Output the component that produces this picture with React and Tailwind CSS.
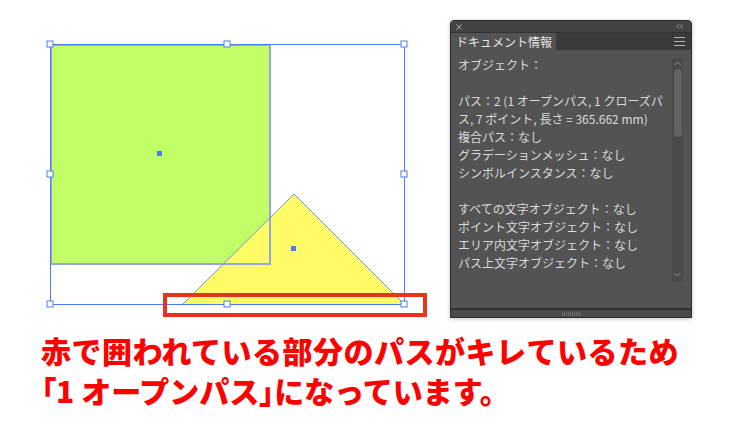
import React from "react";

const BLUE = "#4a7df0";

const handles = [
  [50, 44], [227, 44], [404, 44],
  [50, 174], [404, 174],
  [50, 304], [227, 304], [404, 304],
];

const Artboard = () => (
  <svg width="440" height="320" viewBox="0 0 440 320" className="shrink-0 block">
    {/* fills */}
    <rect x="50" y="44" width="220" height="220" fill="#c2ff66" />
    <polygon points="183,304 294,194 404,304" fill="#fffb66" />

    {/* selection outlines */}
    <rect x="51" y="45" width="219" height="219" fill="none" stroke="#93a7dc" strokeWidth="2" />
    <polyline points="183,304 294,194 404,304" fill="none" stroke="#6a95f2" strokeWidth="1" />
    <rect x="50.5" y="44.5" width="354" height="260" fill="none" stroke={BLUE} strokeWidth="1" />

    {handles.map(([x, y]) => (
      <rect key={`${x}-${y}`} x={x - 3} y={y - 3} width="6" height="6" fill="#fff" stroke={BLUE} strokeWidth="1" />
    ))}

    <rect x="157" y="151" width="5" height="5" fill={BLUE} />
    <rect x="291" y="246" width="5" height="5" fill={BLUE} />

    {/* callout */}
    <rect x="165" y="295" width="260" height="20" fill="none" stroke="#e8341c" strokeWidth="4" />
  </svg>
);

const infoLines = [
  "オブジェクト：",
  "",
  "パス：2 (1 オープンパス, 1 クローズパ",
  "ス, 7 ポイント, 長さ = 365.662 mm)",
  "複合パス：なし",
  "グラデーションメッシュ：なし",
  "シンボルインスタンス：なし",
  "",
  "すべての文字オブジェクト：なし",
  "ポイント文字オブジェクト：なし",
  "エリア内文字オブジェクト：なし",
  "パス上文字オブジェクト：なし",
];

const DocInfoPanel = () => (
  <div className="w-[242px] h-[298px] flex flex-col bg-[#535353] border border-[#2c2c2c] rounded-t-[4px] shadow-[0_1px_4px_rgba(0,0,0,0.25)] overflow-hidden font-['Noto_Sans_CJK_JP',sans-serif]">
    {/* title bar */}
    <div className="h-[12px] flex items-center justify-between px-[5px] bg-[#434343] border-b border-[#333333]">
      <svg width="6" height="6" viewBox="0 0 6 6">
        <path d="M0.5 0.5 L5.5 5.5 M5.5 0.5 L0.5 5.5" stroke="#a8a8a8" strokeWidth="1" />
      </svg>
      <svg width="7" height="5" viewBox="0 0 7 5" className="mr-[3px]">
        <path d="M3 0.5 L1 2.5 L3 4.5 M6.5 0.5 L4.5 2.5 L6.5 4.5" stroke="#9a9a9a" strokeWidth="1" fill="none" />
      </svg>
    </div>

    {/* tab row */}
    <div className="h-[17px] flex items-stretch bg-[#3a3a3a]">
      <div className="w-[105px] bg-[#535353] flex items-center pl-[5px] text-[12px] leading-none text-[#e4e4e4]">
        ドキュメント情報
      </div>
      <div className="flex-1 flex items-center justify-end pr-[6px]">
        <svg width="11" height="9" viewBox="0 0 11 9">
          <path d="M0 0.5 H11 M0 4.5 H11 M0 8.5 H11" stroke="#b4b4b4" strokeWidth="1" />
        </svg>
      </div>
    </div>

    {/* content */}
    <div className="flex-1 flex">
      <div className="flex-1 pl-[7px] pt-[6px] text-[12px] leading-[18px] text-[#d9d9d9] whitespace-nowrap">
        {infoLines.map((line, i) => (
          <div key={i} className="h-[18px]">{line}</div>
        ))}
      </div>
      <div className="w-[11px] mr-[8px] mt-[8px] h-[224px] bg-[#4a4a4a] flex flex-col items-center">
        <svg width="7" height="5" viewBox="0 0 7 5" className="mt-[3px]">
          <path d="M0.5 4 L3.5 1 L6.5 4" stroke="#8c8c8c" strokeWidth="1" fill="none" />
        </svg>
        <div className="w-[8px] h-[68px] mt-[3px] rounded-full bg-[#626262]" />
        <div className="flex-1" />
        <svg width="7" height="5" viewBox="0 0 7 5" className="mb-[5px]">
          <path d="M0.5 1 L3.5 4 L6.5 1" stroke="#8c8c8c" strokeWidth="1" fill="none" />
        </svg>
      </div>
    </div>

    {/* footer */}
    <div className="h-[2px] bg-[#333333]" />
    <div className="h-[7px] bg-[#4b4b4b] flex items-center justify-center">
      <svg width="19" height="4" viewBox="0 0 19 4">
        {[0, 2, 4, 6, 8, 10, 12, 14, 16, 18].map((x) => (
          <rect key={x} x={x} y="0" width="1" height="4" fill="#6e6e6e" />
        ))}
      </svg>
    </div>
  </div>
);

export default function App() {
  return (
    <div className="w-[739px] h-[430px] bg-white overflow-hidden">
      <div className="flex h-[320px]">
        <Artboard />
        <div className="pt-[20px] pl-[10px]">
          <DocInfoPanel />
        </div>
      </div>
      <div className="mt-[10px] pl-[41px] text-[30px] leading-[40px] font-black text-[#ff0000] whitespace-nowrap font-['Noto_Sans_CJK_JP',sans-serif]">
        <div className="tracking-[0.5px]">赤で囲われている部分のパスがキレているため</div>
        <div>
          <span className="[font-feature-settings:'palt']">「</span>1 オープンパス<span className="[font-feature-settings:'palt']">」</span>になっています。
        </div>
      </div>
    </div>
  );
}
